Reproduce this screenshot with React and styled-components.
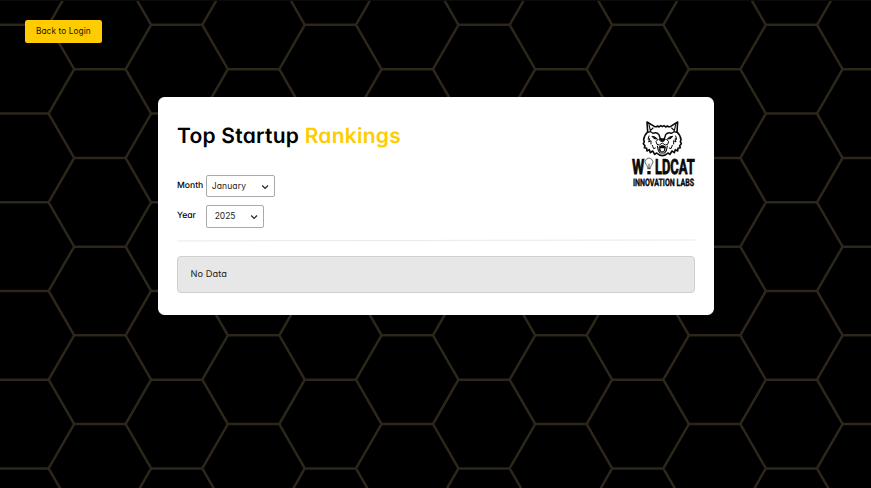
import React from "react";
import styled, { createGlobalStyle } from "styled-components";

const GlobalStyle = createGlobalStyle`
  *, *::before, *::after { box-sizing: border-box; }
  body {
    margin: 0;
    background: #000;
    color: #000;
    font-family: Inter, "Open Sans", sans-serif;
    font-feature-settings: "cv11";
    text-rendering: geometricPrecision;
  }
`;

const Page = styled.div`
  position: relative;
  height: 100vh;
  overflow: hidden;
  padding: 20px 25px;
  isolation: isolate;
`;

const Backdrop = styled.svg`
  position: absolute;
  inset: 0;
  width: 100%;
  height: 100%;
  z-index: -1;
  border-top: 1px solid #0b0b0b;
`;

const BackButton = styled.button`
  display: block;
  width: 76.7px;
  height: 22.6px;
  padding: 0;
  border: 0;
  border-radius: 2.5px;
  background: #ffcc02;
  color: #1a1500;
  font: inherit;
  font-size: 8.3px;
  letter-spacing: 0.09px;
  line-height: 22.6px;
`;

const Card = styled.main`
  width: 556px;
  height: 218.4px;
  margin: 54.2px 0 0 132.8px;
  padding: 24px 19px 0 19.2px;
  border-radius: 6.5px;
  background: #fff;
`;

const Header = styled.header`
  display: flex;
  justify-content: space-between;
  height: 118px;
`;

const Title = styled.h1`
  margin: 0;
  font-size: 21px;
  line-height: 31px;
  font-weight: 600;
  letter-spacing: 0.24px;
  white-space: nowrap;
`;

const Accent = styled.span`
  color: #ffcc02;
`;

const Filters = styled.div`
  display: grid;
  gap: 7.6px;
  margin-top: 23px;
`;

const Field = styled.div`
  display: flex;
  align-items: center;
  height: 22.7px;
`;

const Label = styled.label`
  width: 29px;
  font-size: 8.6px;
  font-weight: 550;
  white-space: nowrap;
`;

const Select = styled.button`
  display: flex;
  align-items: center;
  justify-content: space-between;
  width: ${(p) => p.$width}px;
  height: 100%;
  padding: 0 5px 0 ${(p) => p.$inset}px;
  border: 1px solid #aaa;
  border-radius: 2px;
  background: #fff;
  color: #222;
  font: inherit;
  font-size: 8.5px;
  letter-spacing: ${(p) => p.$spacing || 0}px;
`;

const Chevron = styled.svg`
  width: 8px;
  height: 6px;
  margin-top: 1px;
`;

const Logo = styled.svg`
  width: 90px;
  height: 80px;
  margin: -9px -15px 0 0;
  flex: none;
  overflow: visible;
`;

const Divider = styled.hr`
  height: 1px;
  margin: 0.8px 0 15.6px;
  border: 0;
  background: #e9e9e9;
  transform: rotate(-0.11deg);
`;

const EmptyState = styled.div`
  height: 36.8px;
  padding-left: 12.4px;
  border: 1px solid #d0d0d0;
  border-radius: 4px;
  background: #e7e7e7;
  color: #1c1c1c;
  font-size: 9.2px;
  line-height: 35.6px;
  letter-spacing: 0.1px;
`;

const TILE_W = 153.68;
const TILE_H = 88.73;

function honeycombPath() {
  const parts = [];
  for (let col = -1; col < 6; col += 1) {
    for (let row = -1; row < 6; row += 1) {
      const x = 48.6 + col * TILE_W;
      const y = 23.8 + row * TILE_H;
      const mid = y + TILE_H / 2;
      const end = y + TILE_H;
      parts.push(
        `M${x} ${y}L${x + 25.6} ${mid}L${x} ${end}`,
        `M${x + 25.6} ${mid}H${x + 77}`,
        `M${x + 102.5} ${y}L${x + 77} ${mid}L${x + 102.5} ${end}`,
        `M${x + 102.5} ${y}H${x + TILE_W}`
      );
    }
  }
  return parts.join("");
}

const HONEYCOMB = honeycombPath();

function Honeycomb() {
  return (
    <Backdrop aria-hidden="true">
      <path d={HONEYCOMB} fill="none" stroke="#2d261a" strokeWidth="2.5" />
    </Backdrop>
  );
}

function Dropdown({ label, value, width, inset, spacing }) {
  return (
    <Field>
      <Label>{label}</Label>
      <Select type="button" $width={width} $inset={inset} $spacing={spacing}>
        {value}
        <Chevron viewBox="0 0 8 6" fill="none" stroke="#222" strokeWidth="1.2">
          <path d="M1.2 1.5L4.1 4.4L7 1.5" />
        </Chevron>
      </Select>
    </Field>
  );
}

function WildcatLogo() {
  return (
    <Logo viewBox="0 0 270 240" role="img" aria-label="Wildcat Innovation Labs">
      <g fill="none" stroke="#0a0a0a" strokeWidth="4.8" strokeLinejoin="round" strokeLinecap="round">
        <path d="M83 60L81 30L103 43Q107 46 113 42L117 45L122 41L127 44L132 41L137 45L142 42Q148 46 152 43L173 30L171 60" />
        <path d="M83 60Q72 70 71 84L73 89L70 95L75 101L73 107L80 109L81 117L88 113L91 122L98 117L104 127L110 123Q118 131 127 131Q136 131 144 123L150 127L156 117L163 122L166 113L173 117L174 109L181 107L179 101L184 95L181 89L183 84Q182 70 171 60" />
        <path d="M87 38L91 56L99 48M167 38L163 56L155 48" strokeWidth="3.4" />
        <path d="M83 61L92 59L98 63M171 61L162 59L156 63" strokeWidth="3.4" />
        <path d="M99 64Q110 59 117 68L121 80M155 64Q144 59 137 68L133 80" strokeWidth="4.2" />
        <path d="M87 72L84 82L89 80L86 90L93 86L93 96M167 72L170 82L165 80L168 90L161 86L161 96" strokeWidth="3" />
        <path d="M97 73L105 75L112 81L103 80ZM157 73L149 75L142 81L151 80Z" fill="#0a0a0a" strokeWidth="3" />
        <path d="M114 82L108 89L111 97L118 99L127 93L136 99L143 97L146 89L140 82" strokeWidth="3" />
        <path d="M118 81L127 80L136 81L131 88H123Z" fill="#0a0a0a" strokeWidth="3" />
        <path d="M112 102L115 116L120 123H134L139 116L142 102" strokeWidth="3.2" />
        <path d="M118 104Q127 97 136 104L134 117L127 120L120 117Z" fill="#0a0a0a" strokeWidth="3" />
        <path d="M97 100L101 110L106 108M157 100L153 110L148 108" strokeWidth="3" />
      </g>
      <path d="M121 109H133L131 118H123Z" fill="#fff" />
      <g fill="#0a0a0a" stroke="#0a0a0a" fontFamily="Roboto, sans-serif" fontWeight="700">
        <text x="36" y="186.5" fontSize="63" textLength="37" lengthAdjust="spacingAndGlyphs" strokeWidth="2.4">W</text>
        <text x="105" y="186.5" fontSize="63" textLength="119" lengthAdjust="spacingAndGlyphs" strokeWidth="2.4">LDCAT</text>
        <text x="39" y="223" fontSize="31" textLength="183" lengthAdjust="spacingAndGlyphs" strokeWidth="1.2">INNOVATION LABS</text>
      </g>
      <g fill="none" stroke="#333" strokeWidth="2.2">
        <path d="M82 166Q82 161 78 157A11.5 11.5 0 1 1 96 157Q92 161 92 166ZM84 155L87 158L90 155M87 158V165" />
        <path d="M82 170H92" strokeWidth="3" />
      </g>
      <path d="M82 177H92V187H82Z" fill="#0a0a0a" />
    </Logo>
  );
}

export default function App() {
  return (
    <>
      <GlobalStyle />
      <Page>
        <Honeycomb />
        <BackButton type="button">Back to Login</BackButton>
        <Card>
          <Header>
            <div>
              <Title>
                Top Startup <Accent>Rankings</Accent>
              </Title>
              <Filters>
                <Dropdown label="Month" value="January" width={68.7} inset={4.8} spacing={0.12} />
                <Dropdown label="Year" value="2025" width={58} inset={7.8} spacing={-0.1} />
              </Filters>
            </div>
            <WildcatLogo />
          </Header>
          <Divider />
          <EmptyState>No Data</EmptyState>
        </Card>
      </Page>
    </>
  );
}
